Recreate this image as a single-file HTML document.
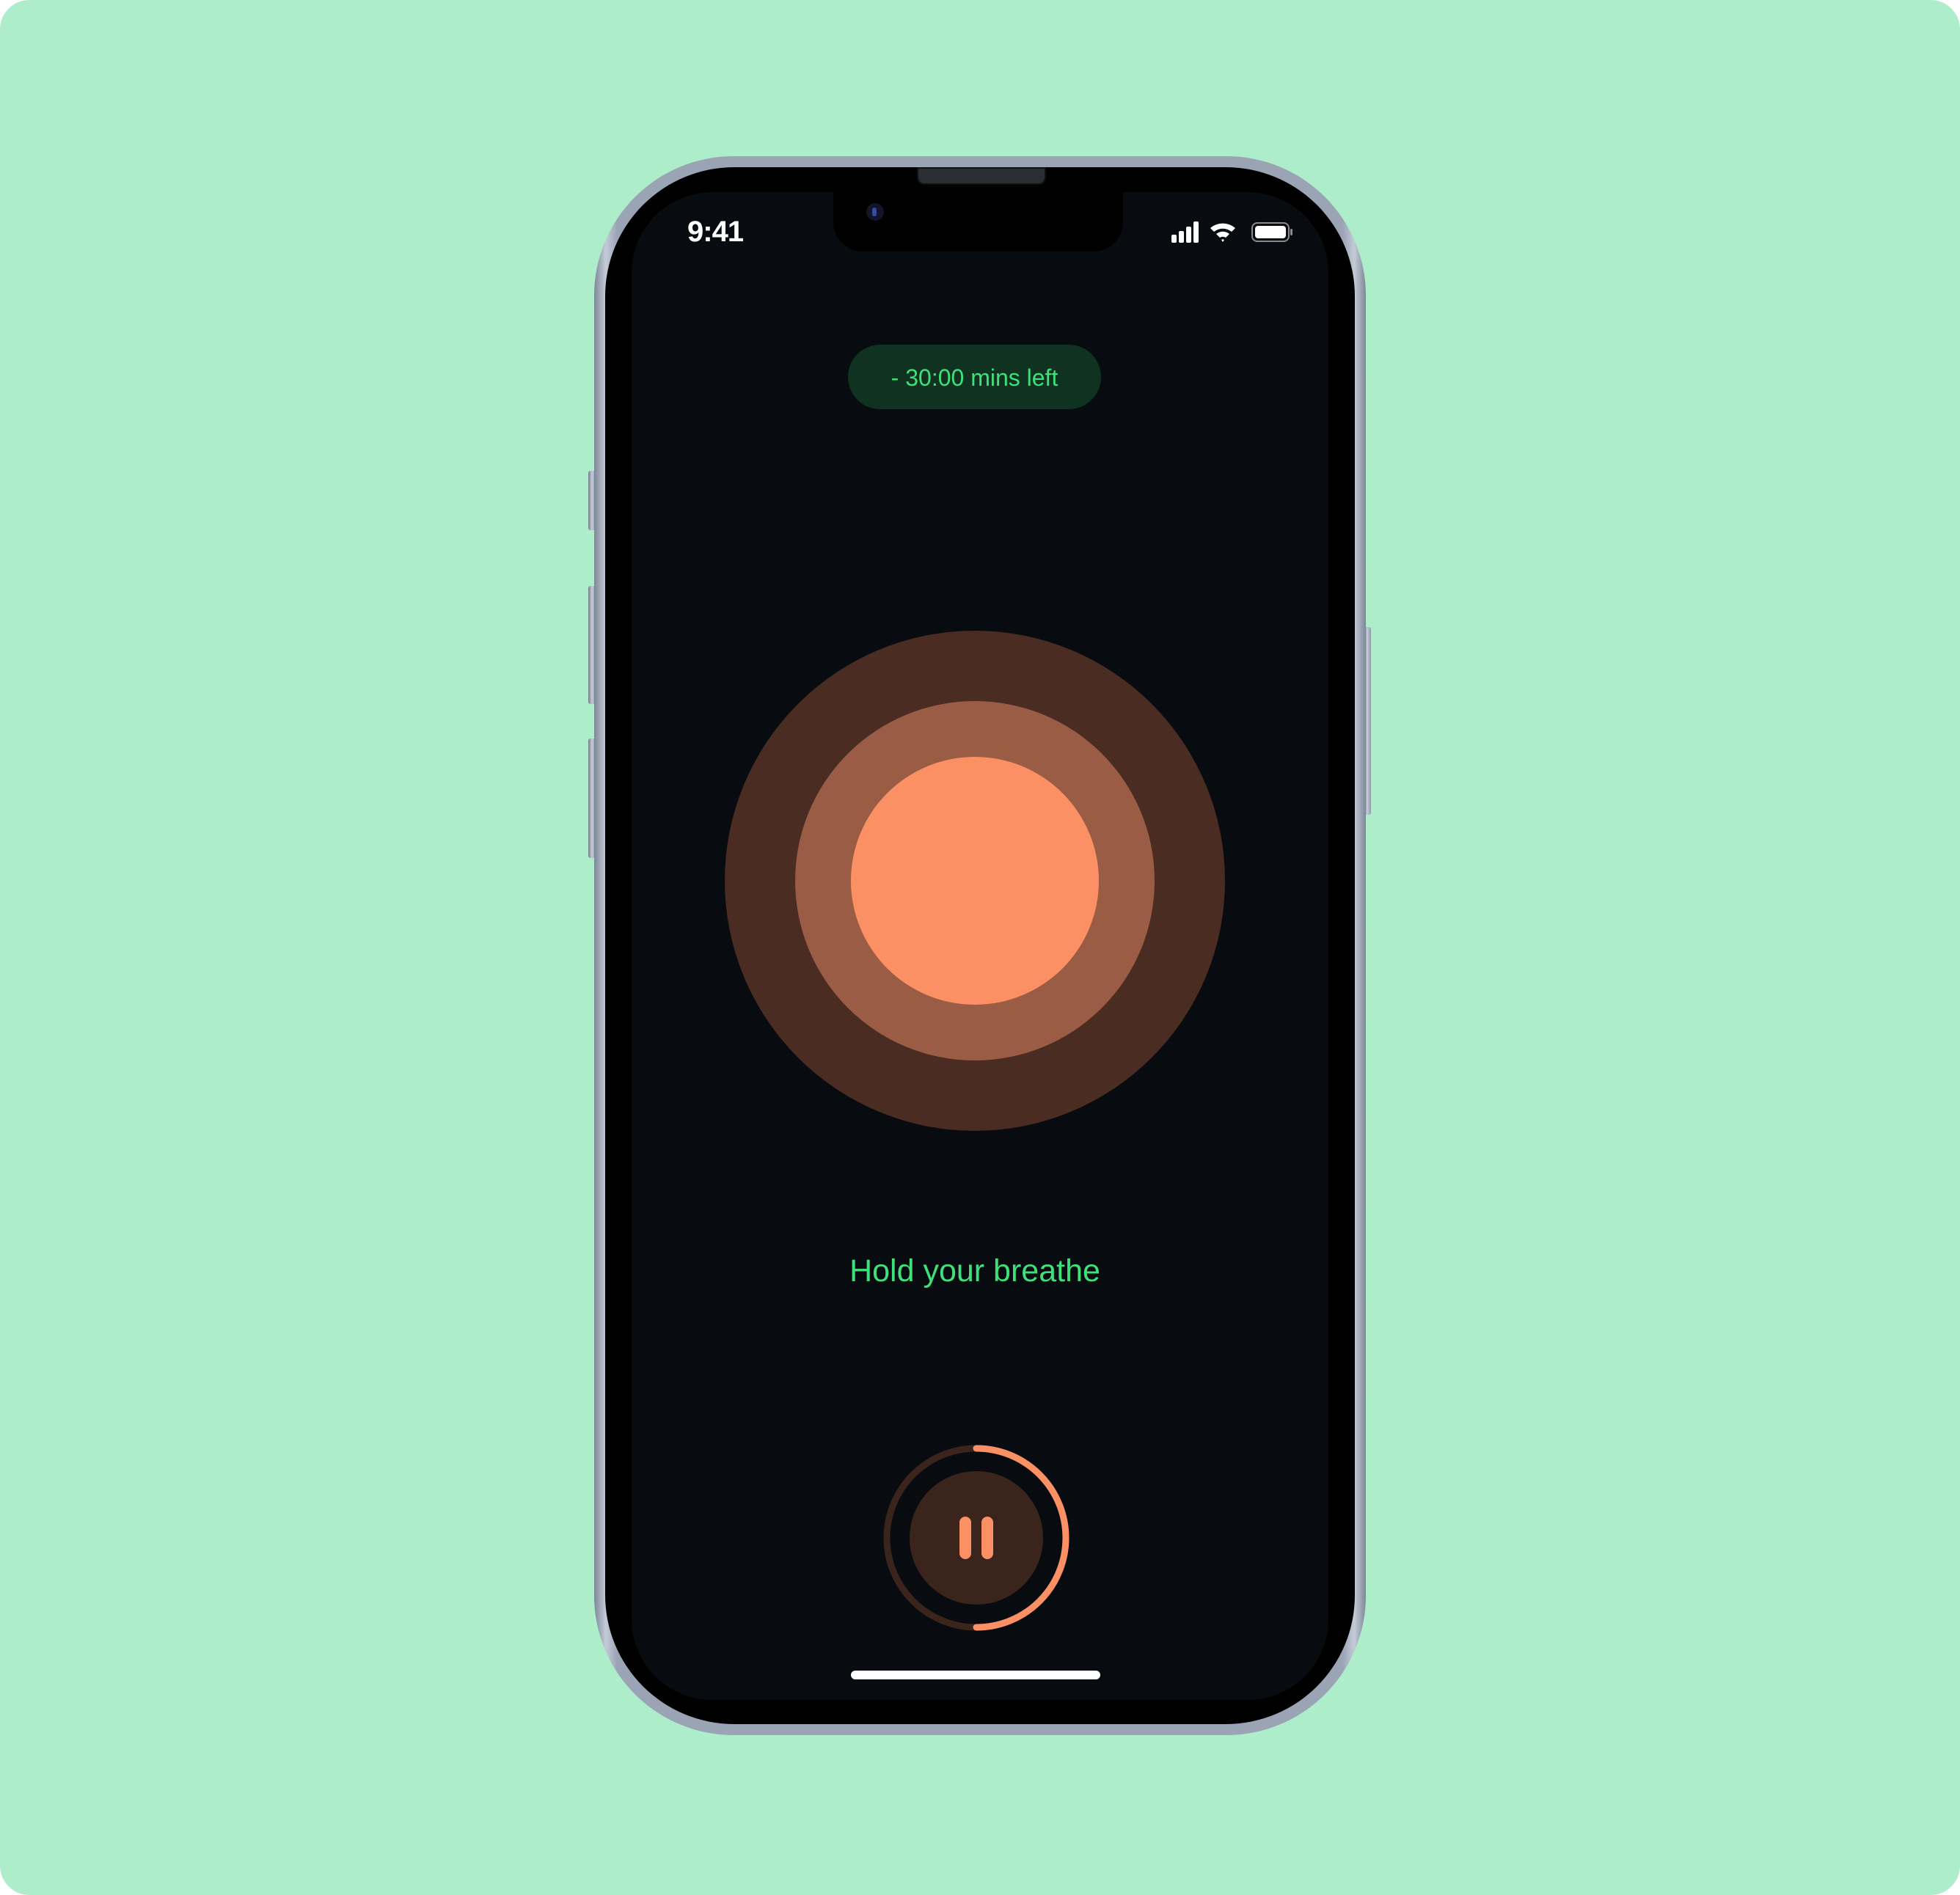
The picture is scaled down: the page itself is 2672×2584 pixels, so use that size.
<!DOCTYPE html>
<html><head><meta charset="utf-8"><style>
html,body{margin:0;padding:0;background:#fff}
#bg{position:relative;width:2672px;height:2584px;background:#aeedca;border-radius:40px;overflow:hidden;font-family:"Liberation Sans",sans-serif}
.abs{position:absolute}
.btn{position:absolute;background:linear-gradient(90deg,#6f7a8a,#c5cdd9,#8c96a6);border-radius:3px}
</style></head><body><div id="bg">
<div class="btn" style="left:802px;top:642px;width:10px;height:81px"></div>
<div class="btn" style="left:802px;top:799px;width:10px;height:161px"></div>
<div class="btn" style="left:802px;top:1007px;width:10px;height:163px"></div>
<div class="btn" style="left:1859px;top:855px;width:10px;height:256px"></div>
<div class="abs" style="left:810px;top:213px;width:1052px;height:2153px;border-radius:190px;background:linear-gradient(90deg,#7d8797,#c3cbd7 1.5%,#9aa4b4 3%,#9aa4b4 97%,#c3cbd7 98.5%,#7d8797);"></div>
<div class="abs" style="left:825px;top:228px;width:1022px;height:2123px;border-radius:176px;background:#000"></div>
<div class="abs" style="left:861px;top:262px;width:950px;height:2056px;border-radius:110px;background:#080c10"></div>
<div class="abs" style="left:1250px;top:228px;width:172px;height:20px;border-radius:0 0 10px 10px;background:#2a2d31;border:2px solid #111"></div>
<div class="abs" style="left:1136px;top:262px;width:395px;height:81px;border-radius:0 0 40px 40px;background:#000"></div>
<div class="abs" style="left:1181px;top:277px;width:24px;height:24px;border-radius:50%;background:#12142a"></div>
<div class="abs" style="left:1189px;top:283px;width:6px;height:12px;border-radius:3px;background:#3a4aa0"></div>
<div class="abs" style="left:937px;top:294px;color:#fff;font-size:40px;font-weight:bold;letter-spacing:-1px">9:41</div>
<svg class="abs" style="left:1595px;top:298px" width="180" height="36" viewBox="0 0 180 36">
<rect x="2" y="22" width="7" height="11" rx="2" fill="#fff"/><rect x="12" y="17" width="7" height="16" rx="2" fill="#fff"/><rect x="22" y="11" width="7" height="22" rx="2" fill="#fff"/><rect x="32" y="4" width="7" height="29" rx="2" fill="#fff"/>
<path d="M55 13 A26 26 0 0 1 89 13 L84 18 A19 19 0 0 0 60 18 Z M63 21 A14 14 0 0 1 81 21 L76 26 A7 7 0 0 0 68 26 Z M70 29 L72 32 L74 29 A3 3 0 0 0 70 29Z" fill="#fff"/>
<rect x="112" y="6" width="50" height="25" rx="7" fill="none" stroke="#8a8a8a" stroke-width="2"/><rect x="116" y="10" width="42" height="17" rx="4" fill="#fff"/><rect x="164" y="14" width="3" height="9" rx="1.5" fill="#8a8a8a"/>
</svg>
<div class="abs" style="left:1156px;top:470px;width:345px;height:88px;border-radius:44px;background:#0f3320;color:#3fe07a;font-size:32px;line-height:90px;text-align:center">- 30:00 mins left</div>
<div class="abs" style="left:988px;top:860px;width:682px;height:682px;border-radius:50%;background:#4a2c22"></div>
<div class="abs" style="left:1084px;top:956px;width:490px;height:490px;border-radius:50%;background:#9a5c44"></div>
<div class="abs" style="left:1160px;top:1032px;width:338px;height:338px;border-radius:50%;background:#fb9065"></div>
<div class="abs" style="left:1029px;top:1709px;width:600px;text-align:center;color:#3fe07a;font-size:43px">Hold your breathe</div>
<svg class="abs" style="left:1201px;top:1967px" width="260" height="260" viewBox="0 0 260 260">
<circle cx="130" cy="130" r="122" fill="none" stroke="#3a241c" stroke-width="9"/>
<path d="M130 8 A122 122 0 0 1 130 252" fill="none" stroke="#fb9065" stroke-width="9" stroke-linecap="round"/>
<circle cx="130" cy="130" r="91" fill="#3a241c"/>
<rect x="107" y="101" width="16" height="58" rx="8" fill="#fb9065"/><rect x="137" y="101" width="16" height="58" rx="8" fill="#fb9065"/>
</svg>
<div class="abs" style="left:1160px;top:2278px;width:340px;height:12px;border-radius:6px;background:#fff"></div>
</div></body></html>
